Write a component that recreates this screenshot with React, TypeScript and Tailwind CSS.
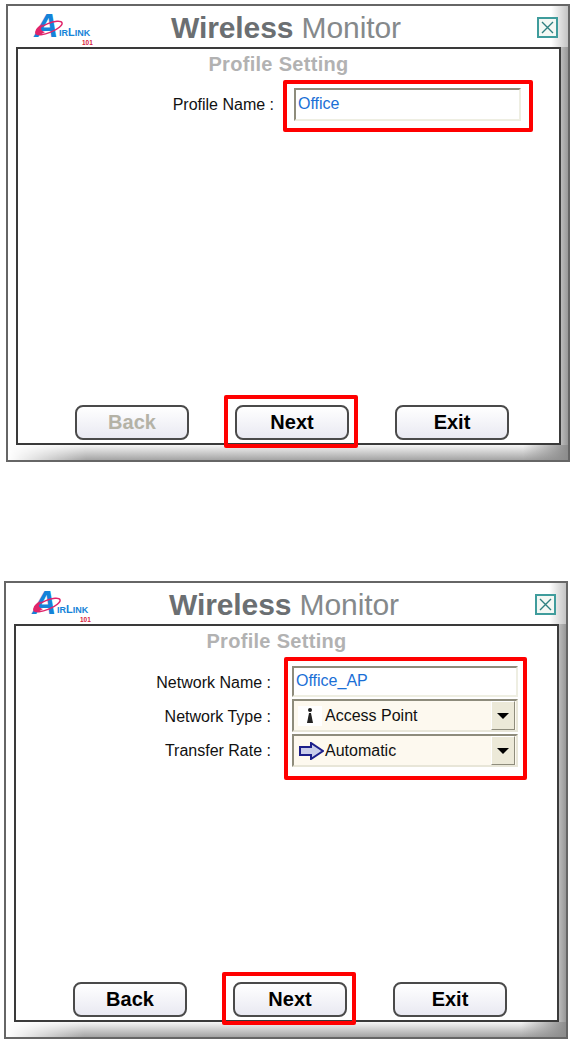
import type { ReactNode } from 'react'

const sans = { fontFamily: '"Liberation Sans", Arial, sans-serif' }

function Logo() {
  return (
    <svg width="64" height="36" viewBox="0 0 64 36" className="shrink-0 overflow-visible">
      <text x="1" y="27" fontSize="34" fontWeight="700" fontStyle="italic" fill="#1583d8" style={sans}>A</text>
      <ellipse cx="16" cy="18" rx="14" ry="4.5" transform="rotate(-22 16 18)" fill="none" stroke="#e0246a" strokeWidth="1.5" />
      <path d="M3 24 C1 20 5 16 10 14 C7 17 7 21 12 22 C9 24 5 26 3 24 Z" fill="#e0246a" />
      <text x="26" y="26" fontWeight="700" fill="#1583d8" style={sans}>
        <tspan fontSize="9">IR</tspan>
        <tspan fontSize="11">L</tspan>
        <tspan fontSize="9">INK</tspan>
      </text>
      <text x="49" y="35" fontSize="6.5" fontWeight="700" fill="#d81b3c" style={sans}>101</text>
    </svg>
  )
}

function CloseBox() {
  return (
    <div className="w-[21px] h-[21px] border-2 border-[#3f9c9c] bg-[#f4f8f4] flex items-center justify-center">
      <svg width="13" height="13" viewBox="0 0 13 13" fill="none" stroke="#2f8080" strokeWidth="1.4">
        <path d="M1 1 L12 12 M12 1 L1 12" />
      </svg>
    </div>
  )
}

function PushButton({ label, disabled }: { label: string; disabled?: boolean }) {
  return (
    <div
      className={`w-[114px] h-[35px] rounded-lg border-2 border-[#4a4a4a] bg-gradient-to-b from-white to-[#e9e9f2] flex items-center justify-center text-[20px] leading-[28px] pb-[2px] font-bold ${
        disabled ? 'text-[#b4b2a6]' : 'text-black'
      }`}
    >
      {label}
    </div>
  )
}

function ButtonRow({ backDisabled }: { backDisabled?: boolean }) {
  return (
    <div className="mt-auto mb-[3px] ml-[57px] flex gap-[46px]">
      <PushButton label="Back" disabled={backDisabled} />
      <div className="relative">
        <PushButton label="Next" />
        <div className="absolute -left-[11px] -right-[9px] -top-[10px] -bottom-[8px] border-4 border-[#f00] rounded-[2px]" />
      </div>
      <PushButton label="Exit" />
    </div>
  )
}

function Window({ className, title, children }: { className: string; title: string; children: ReactNode }) {
  return (
    <div className={`w-[564px] h-[458px] border-2 border-[#666] bg-white flex flex-col overflow-hidden ${className}`}>
      <div className="h-[41px] shrink-0 flex items-center pl-[25px] pr-[10px] pt-[2px] bg-[linear-gradient(to_right,#fff_97%,#c4c4c4_100%)]">
        <Logo />
        <div className="ml-[74px] text-[30px] leading-none whitespace-nowrap tracking-[-0.1px]">
          <span className="font-bold text-[#6b6f72]">Wireless</span>{' '}
          <span className="text-[#85898b]">Monitor</span>
        </div>
        <div className="ml-auto">
          <CloseBox />
        </div>
      </div>
      <div className="flex h-[398px] shrink-0">
        <div className="ml-[8px] w-[545px] shrink-0 border-2 border-[#3a3a3a] bg-white flex flex-col">
          <div className="text-center text-[20px] leading-[24px] mt-[3px] mr-[20px] font-bold tracking-[0.3px] text-[#b2b2b2]">{title}</div>
          {children}
        </div>
        <div className="flex-1 bg-gradient-to-r from-[#bcbcbc] to-[#989898]" />
      </div>
      <div className="flex-1 bg-[linear-gradient(to_right,#fff,transparent_14%),linear-gradient(to_right,transparent_92%,#8c8c8c_100%),linear-gradient(to_bottom,#f6f6f6,#a4a4a4)]" />
    </div>
  )
}

function ArrowIcon() {
  return (
    <svg width="26" height="18" viewBox="0 0 26 18" className="shrink-0">
      <path d="M2 5 H13 V1 L25 9 L13 17 V13 H2 Z" fill="#c9cdea" stroke="#1c1f8a" strokeWidth="2" />
    </svg>
  )
}

function TowerIcon() {
  return (
    <svg width="24" height="20" viewBox="0 0 24 20" className="shrink-0">
      <rect width="24" height="20" fill="#fff" />
      <circle cx="12" cy="4" r="2" fill="#222" />
      <path d="M11 7 H13 L15 17 H9 Z" fill="#222" />
    </svg>
  )
}

function Dropdown({ icon, value }: { icon: ReactNode; value: string }) {
  return (
    <div className="h-[33px] border-2 border-[#8e8c7c] border-r-[#e8e6d8] border-b-[#e8e6d8] bg-[#fdf9ef] flex items-center pl-[4px] text-[16px] text-[#111]">
      <span className="w-[27px] flex justify-start">{icon}</span>
      <span>{value}</span>
      <div className="ml-auto mr-[1px] w-[24px] h-[29px] bg-[#ece9d8] border border-white border-r-[#8e8c7c] border-b-[#8e8c7c] flex items-center justify-center">
        <div className="w-0 h-0 border-x-[6px] border-x-transparent border-t-[6px] border-t-black" />
      </div>
    </div>
  )
}

export default function App() {
  return (
    <div className="min-h-[1045px] bg-white pt-[4px]" style={sans}>
      <Window className="ml-[6px]" title="Profile Setting">
        <div className="flex mt-[4px]">
          <div className="w-[256px] text-right text-[16px] text-[#111] pt-[13px]">Profile Name :</div>
          <div className="ml-[9px] w-[250px] h-[52px] border-4 border-[#f00] rounded-[2px] pl-[7px] pr-[8px] pt-[4px]">
            <div className="h-[33px] border-2 border-[#8e8c7c] border-r-[#eeeee2] border-b-[#eeeee2] bg-white pl-[2px] text-[16px] leading-[27px] text-[#1a6fd6]">
              Office
            </div>
          </div>
        </div>
        <ButtonRow backDisabled />
      </Window>

      <Window className="ml-[4px] mt-[119px]" title="Profile Setting">
        <div className="flex mt-[4px]">
          <div className="w-[255px] text-right text-[16px] text-[#111] pt-[16px] flex flex-col gap-[15px] leading-[19px]">
            <div>Network Name :</div>
            <div>Network Type :</div>
            <div>Transfer Rate :</div>
          </div>
          <div className="ml-[13px] w-[243px] h-[123px] border-4 border-[#f00] rounded-[2px] pl-[4px] pr-[5px] pt-[5px] flex flex-col gap-[2px]">
            <div className="h-[31px] border-2 border-[#8e8c7c] border-r-[#eeeee2] border-b-[#eeeee2] bg-white pl-[2px] text-[16px] leading-[25px] text-[#1a6fd6]">
              Office_AP
            </div>
            <Dropdown icon={<TowerIcon />} value="Access Point" />
            <Dropdown icon={<ArrowIcon />} value="Automatic" />
          </div>
        </div>
        <ButtonRow />
      </Window>
    </div>
  )
}
